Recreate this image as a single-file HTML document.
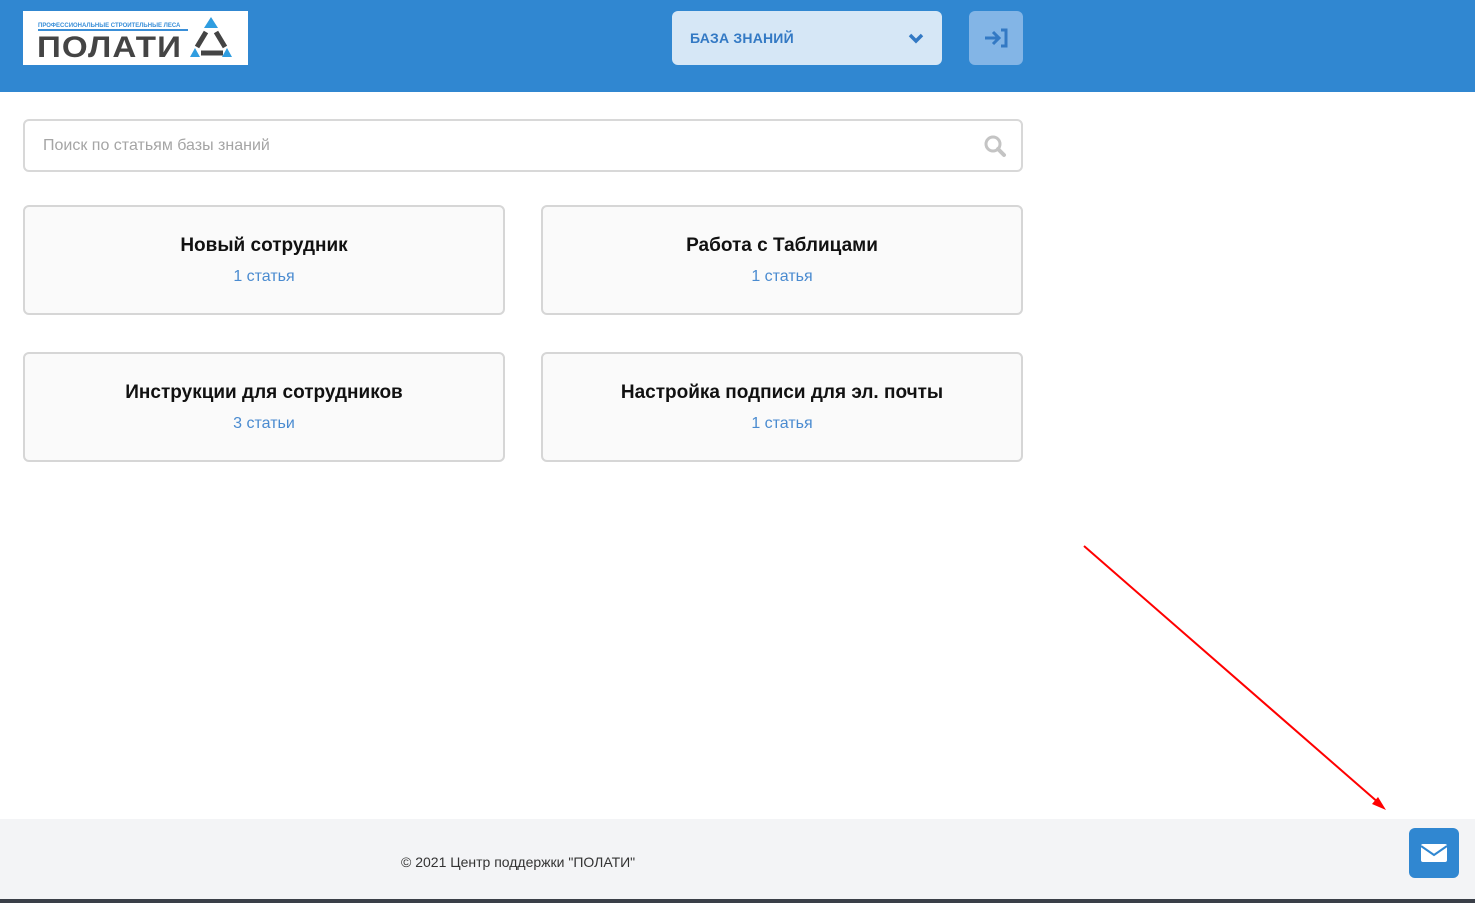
<!DOCTYPE html>
<html><head><meta charset="utf-8"><style>
*{box-sizing:border-box;margin:0;padding:0}
body{width:1475px;height:903px;overflow:hidden;background:#fff;font-family:"Liberation Sans",sans-serif;position:relative}
.hdr{position:absolute;left:0;top:0;width:1475px;height:92px;background:#3087d1}
.logo{position:absolute;left:23px;top:11px;width:225px;height:54px;background:#fff}
.sel{position:absolute;left:672px;top:11px;width:270px;height:54px;background:#d6e7f6;border-radius:6px}
.sel span{position:absolute;left:18px;top:19px;font-size:14px;font-weight:bold;color:#3379c4;letter-spacing:.2px}
.login{position:absolute;left:969px;top:11px;width:54px;height:54px;background:#83b5e6;border-radius:6px}
.search{position:absolute;left:23px;top:119px;width:1000px;height:53px;border:2px solid #d8d8d8;border-radius:6px}
.search span{position:absolute;left:18px;top:16px;font-size:16px;color:#a5a5a5}
.card{position:absolute;width:482px;height:110px;border:2px solid #d6d6d6;border-radius:6px;background:#fafafa;text-align:center}
.card h3{margin-top:28px;font-size:19px;font-weight:bold;color:#111}
.card p{margin-top:11px;font-size:16px;color:#4a8bd0}
.foot{position:absolute;left:0;top:819px;width:1475px;height:80px;background:#f3f4f6}
.foot span{position:absolute;left:401px;top:35px;font-size:14px;color:#333}
.strip{position:absolute;left:0;top:899px;width:1475px;height:4px;background:#3a3f48}
.mail{position:absolute;left:1409px;top:828px;width:50px;height:50px;background:#3087d1;border-radius:6px}
</style></head><body>
<div class="hdr">
 <div class="logo">
  <svg width="225" height="54">
   <text x="15" y="16" font-size="6" font-weight="bold" fill="#3a8fd8" font-family="Liberation Sans">ПРОФЕССИОНАЛЬНЫЕ СТРОИТЕЛЬНЫЕ ЛЕСА</text>
   <rect x="15" y="18" width="150" height="2" fill="#3a8fd8"/>
   <text x="14" y="46" font-size="30" font-weight="bold" fill="#444" font-family="Liberation Sans" letter-spacing="1" textLength="145" lengthAdjust="spacingAndGlyphs">ПОЛАТИ</text>
   <polygon points="188,6 195,17 181,17" fill="#2f9de0"/>
   <polygon points="167,46 177,46 172,37" fill="#2f9de0"/>
   <polygon points="199,46 209,46 204,37" fill="#2f9de0"/>
   <path d="M183,21 L174,36 M193,21 L202,36 M178,42 L200,42" stroke="#444" stroke-width="5"/>
  </svg>
 </div>
 <div class="sel"><span>БАЗА ЗНАНИЙ</span>
  <svg style="position:absolute;left:236px;top:21px" width="16" height="12"><path d="M2,3 L8,9 L14,3" stroke="#3379c4" stroke-width="3.5" fill="none"/></svg>
 </div>
 <div class="login">
  <svg width="54" height="54"><path d="M16,27 H29 M24,21 L30,27 L24,33" stroke="#3379c4" stroke-width="3" fill="none"/><path d="M32,19 H37 V35 H32" stroke="#3379c4" stroke-width="3" fill="none"/></svg>
 </div>
</div>
<div class="search"><span>Поиск по статьям базы знаний</span>
 <svg style="position:absolute;left:958px;top:13px" width="24" height="24"><circle cx="10" cy="10" r="7" stroke="#c4c4c4" stroke-width="3" fill="none"/><path d="M15,15 L21,21" stroke="#c4c4c4" stroke-width="4" stroke-linecap="round"/></svg>
</div>
<div class="card" style="left:23px;top:205px"><h3>Новый сотрудник</h3><p>1 статья</p></div>
<div class="card" style="left:541px;top:205px"><h3>Работа с Таблицами</h3><p>1 статья</p></div>
<div class="card" style="left:23px;top:352px"><h3>Инструкции для сотрудников</h3><p>3 статьи</p></div>
<div class="card" style="left:541px;top:352px"><h3>Настройка подписи для эл. почты</h3><p>1 статья</p></div>
<svg style="position:absolute;left:0;top:0" width="1475" height="903"><path d="M1084,546 L1380,804" stroke="#f00" stroke-width="2"/><polygon points="1386,810 1372,804 1378,797" fill="#f00"/></svg>
<div class="foot"><span>© 2021 Центр поддержки "ПОЛАТИ"</span></div>
<div class="strip"></div>
<div class="mail"><svg width="50" height="50"><rect x="12" y="16" width="26" height="18" rx="2" fill="#fff"/><path d="M12,18 L25,27 L38,18" stroke="#3087d1" stroke-width="2" fill="none"/></svg></div>
</body></html>
